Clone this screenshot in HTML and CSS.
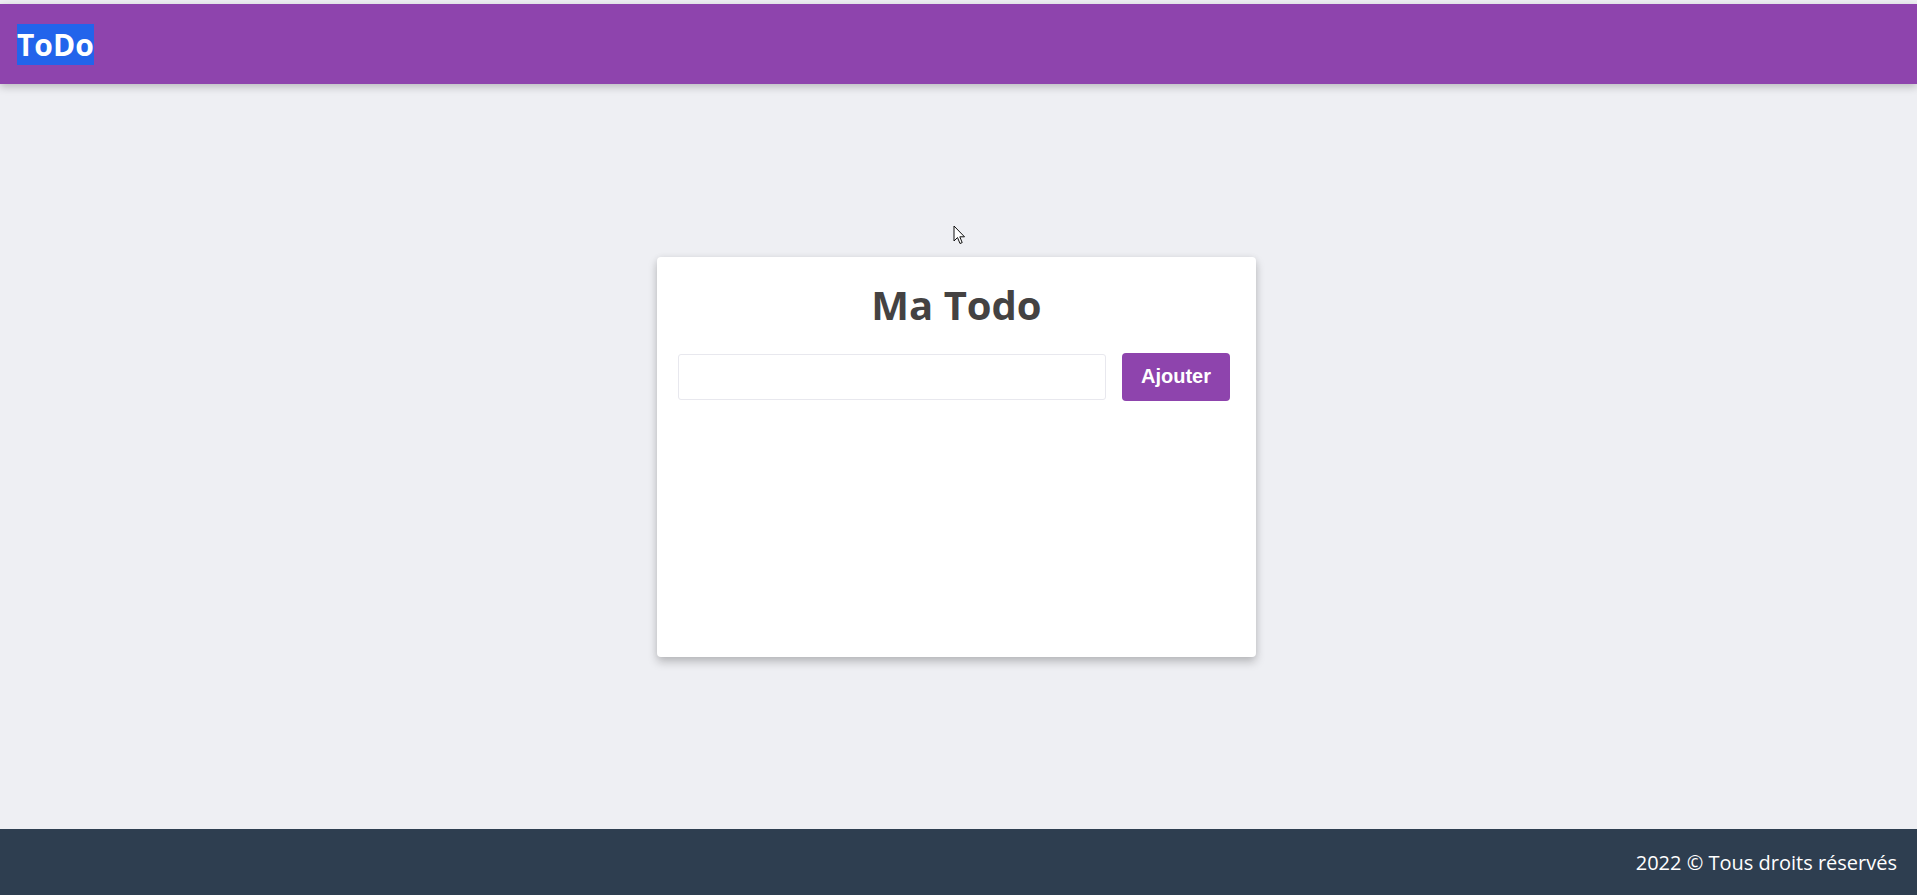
FILE: index.html
```html
<!DOCTYPE html>
<html lang="fr">
<head>
<meta charset="utf-8">
<title>ToDo</title>
<link rel="stylesheet" href="styles.css">
</head>
<body>
<header class="topbar">
  <span class="brand">ToDo</span>
</header>
<main class="content">
  <section class="card">
    <h1 class="card-title">Ma Todo</h1>
    <form class="todo-form">
      <input class="todo-input" type="text">
      <button class="todo-btn" type="button">Ajouter</button>
    </form>
  </section>
  <svg class="cursor" width="13" height="20" viewBox="0 0 13 20"><path d="M1 1 L1 16 L4.5 12.5 L7 18.5 L9.2 17.6 L6.8 11.8 L11.5 11.8 Z" fill="#fff" stroke="#111" stroke-width="1" stroke-linejoin="round"/></svg>
</main>
<footer class="bottombar">
  <span class="copy">2022 © Tous droits réservés</span>
</footer>
</body>
</html>
```
FILE: styles.css
```css
* { box-sizing: border-box; }
html, body { height: 100%; }
body {
  margin: 0;
  background: #eeeff3;
  font-family: "Open Sans", "Noto Sans", sans-serif;
  display: flex;
  flex-direction: column;
  min-height: 100vh;
}
.topbar {
  margin-top: 4px;
  height: 80px;
  background: #8e44ad;
  display: flex;
  align-items: center;
  padding-left: 17px;
  box-shadow: 0 3px 8px rgba(0, 0, 0, 0.22);
  position: relative;
  z-index: 1;
}
.brand {
  font-size: 30px;
  font-weight: 700;
  color: #fff;
  background: #2264eb;
  line-height: normal;
}
.content {
  flex: 1;
  display: flex;
  align-items: center;
  justify-content: center;
  position: relative;
}
.card {
  width: 599px;
  height: 400px;
  margin-right: 4px;
  background: #fff;
  border-radius: 4px;
  box-shadow: 0 5px 10px rgba(0, 0, 0, 0.22), 0 0 6px rgba(0, 0, 0, 0.06);
  padding: 20px 21px;
}
.card-title {
  margin: 0 0 21px;
  text-align: center;
  font-size: 40px;
  font-weight: 700;
  color: #444242;
  line-height: normal;
}
.todo-form {
  display: flex;
  align-items: center;
  gap: 16px;
  padding-right: 5px;
}
.todo-input {
  flex: 1;
  height: 46px;
  border: 1px solid #e8e8ee;
  border-radius: 3px;
  background: #fff;
  outline: none;
}
.todo-btn {
  height: 48px;
  width: 108px;
  border: none;
  border-radius: 4px;
  background: #8e44ad;
  color: #fff;
  font-family: "Liberation Sans", Arial, sans-serif;
  font-weight: 700;
  font-size: 20px;
}
.cursor {
  position: absolute;
  left: 953px;
  top: 141px;
}
.bottombar {
  height: 66px;
  background: #2e3e50;
  display: flex;
  align-items: center;
  justify-content: flex-end;
  padding-right: 20px;
}
.copy {
  color: #fff;
  font-size: 20px;
}
```
